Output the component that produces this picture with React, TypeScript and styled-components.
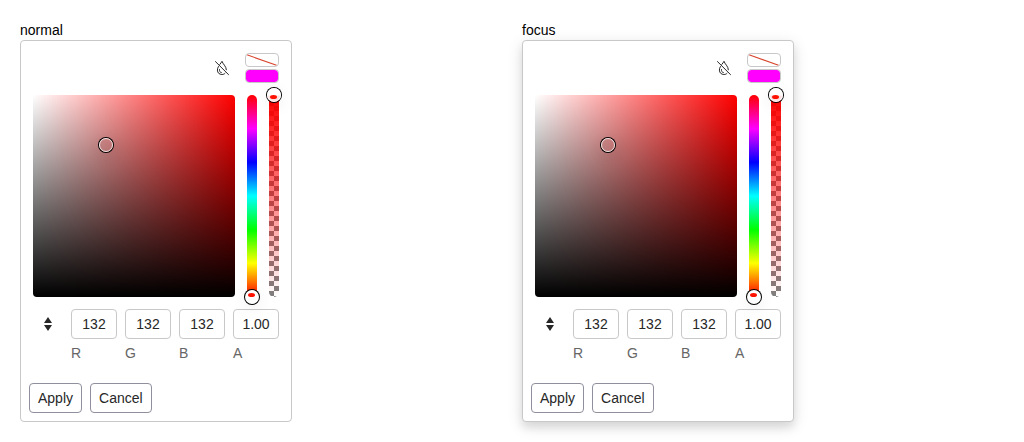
import React from 'react';
import styled, { createGlobalStyle, css } from 'styled-components';

const GlobalStyle = createGlobalStyle`
  *, *::before, *::after { box-sizing: border-box; }
  html, body { height: 100%; overflow: hidden; }
  body {
    margin: 0;
    background: #fff;
    color: #000;
    font-family: "Liberation Sans", Arial, sans-serif;
    font-size: 14px;
    line-height: 20px;
  }
`;

const Page = styled.main`
  display: grid;
  grid-template-columns: 1fr 1fr;
  align-items: start;
  padding: 20px 0 0 20px;
`;

const Panel = styled.section<{ $focused?: boolean }>`
  width: 272px;
  border: 1px solid #c8c8c8;
  border-radius: 4px;
  background: #fff;
  color: #272727;
  ${({ $focused }) =>
    $focused &&
    css`
      box-shadow: 0 6px 8px rgba(0, 0, 0, 0.08), 0 4px 16px rgba(0, 0, 0, 0.12);
    `}
`;

const Content = styled.div`
  display: flex;
  flex-direction: column;
  gap: 12px;
  padding: 12px;
`;

const Header = styled.div`
  display: flex;
  justify-content: flex-end;
  align-items: center;
  gap: 8px;
`;

const IconButton = styled.button`
  display: flex;
  align-items: center;
  justify-content: center;
  width: 30px;
  height: 30px;
  padding: 0;
  border: 0;
  background: none;
  color: inherit;
`;

const Swatches = styled.div`
  display: flex;
  flex-direction: column;
  gap: 2px;
`;

const Swatch = styled.span<{ $color: string }>`
  display: block;
  width: 34px;
  height: 14px;
  border: 1px solid #c8c8c8;
  border-radius: 4px;
  background: ${({ $color }) => $color};
  background-clip: padding-box;
  overflow: hidden;

  svg { display: block; }
`;

const Canvas = styled.div`
  display: flex;
  gap: 12px;
`;

const HsvArea = styled.div`
  position: relative;
  width: 202px;
  height: 202px;
  border-radius: 4px;
  background: linear-gradient(to top, #000, transparent),
    linear-gradient(to right, #fff, rgba(255, 255, 255, 0)), #f00;
`;

const Track = styled.div<{ $kind: 'hue' | 'alpha' }>`
  position: relative;
  width: 10px;
  height: 202px;
  border-radius: 5px;
  background: ${({ $kind }) =>
    $kind === 'hue'
      ? 'linear-gradient(to top, #f00, #ff0 16.67%, #0f0 33.33%, #0ff 50%, #00f 66.67%, #f0f 83.33%, #f00)'
      : `linear-gradient(to top, rgba(255, 0, 0, 0), #f00),
         conic-gradient(#fff 25%, #808080 0 50%, #fff 0 75%, #808080 0) center / 10px 10px`};
`;

const Handle = styled.span<{ $x: number; $y: number; $fill?: string }>`
  position: absolute;
  left: ${({ $x }) => $x - 7}px;
  top: ${({ $y }) => $y - 7}px;
  width: 14px;
  height: 14px;
  border: 1px solid rgba(255, 255, 255, 0.8);
  border-radius: 50%;
  background: ${({ $fill }) => $fill ?? 'transparent'};
  box-shadow: 0 0 0 1px #000, 0 4px 16px rgba(0, 0, 0, 0.09);
`;

const HandleDot = styled.span<{ $top: number }>`
  position: absolute;
  left: 2px;
  top: ${({ $top }) => $top}px;
  width: 7px;
  height: 4px;
  border-radius: 50%;
  background: #f10;
`;

const Inputs = styled.div`
  display: flex;
  align-items: flex-start;
  gap: 8px;
`;

const Field = styled.label`
  display: flex;
  flex-direction: column;
  gap: 4px;
  width: 46px;
  color: #666;
`;

const Value = styled.span`
  height: 30px;
  border: 1px solid #c8c8c8;
  border-radius: 4px;
  color: #272727;
  line-height: 28px;
  text-align: center;
`;

const Footer = styled.div`
  display: flex;
  gap: 8px;
  padding: 8px;
`;

const Button = styled.button`
  height: 30px;
  padding: 4px 8px;
  border: 1px solid #8f8f9d;
  border-radius: 4px;
  background: #fff;
  color: #272727;
  font: inherit;
`;

function DropletSlash() {
  return (
    <svg width="16" height="16" viewBox="0 0 16 16" fill="none" stroke="currentColor" strokeWidth="1">
      <path d="M1.2 1.3 14.8 14.9" />
      <path d="M5.6 4.7C6.6 3.3 7.6 2.3 8 1.3c.7 2.6 4.3 4.9 4.4 8.9" />
      <path d="M4.6 6.2C3.8 7.6 3.4 8.9 3.4 10.1c0 2.7 2 4.4 4.5 4.4 1.4 0 2.6-.5 3.4-1.5" />
      <path d="M5.5 9.2c-.3 2 .6 3.3 2.2 3.4" />
    </svg>
  );
}

function UpDown() {
  return (
    <svg width="16" height="16" viewBox="0 0 16 16" fill="currentColor">
      <path d="M8 1 12 7H4zM4 9h8l-4 6z" />
    </svg>
  );
}

const channels = [
  ['R', '132'],
  ['G', '132'],
  ['B', '132'],
  ['A', '1.00'],
];

function ColorGradient({ focused }: { focused?: boolean }) {
  return (
    <Panel $focused={focused}>
      <Content>
        <Header>
          <IconButton aria-label="Clear">
            <DropletSlash />
          </IconButton>
          <Swatches>
            <Swatch $color="#fff">
              <svg width="32" height="12">
                <path d="M1 .8 30.5 11.3" stroke="#d9442c" strokeWidth="1.15" />
              </svg>
            </Swatch>
            <Swatch $color="#f0f" />
          </Swatches>
        </Header>
        <Canvas>
          <HsvArea>
            <Handle $x={73} $y={50} />
          </HsvArea>
          <Track $kind="hue">
            <Handle $x={5} $y={202} $fill="#fff">
              <HandleDot $top={2} />
            </Handle>
          </Track>
          <Track $kind="alpha">
            <Handle $x={5} $y={0} $fill="linear-gradient(#fff 50%, #ffdede 60%)">
              <HandleDot $top={6} />
            </Handle>
          </Track>
        </Canvas>
        <Inputs>
          <IconButton aria-label="Toggle input mode">
            <UpDown />
          </IconButton>
          {channels.map(([name, value]) => (
            <Field key={name}>
              <Value>{value}</Value>
              {name}
            </Field>
          ))}
        </Inputs>
      </Content>
      <Footer>
        <Button>Apply</Button>
        <Button>Cancel</Button>
      </Footer>
    </Panel>
  );
}

export default function App() {
  return (
    <>
      <GlobalStyle />
      <Page>
        <div>
          normal
          <ColorGradient />
        </div>
        <div>
          focus
          <ColorGradient focused />
        </div>
      </Page>
    </>
  );
}
